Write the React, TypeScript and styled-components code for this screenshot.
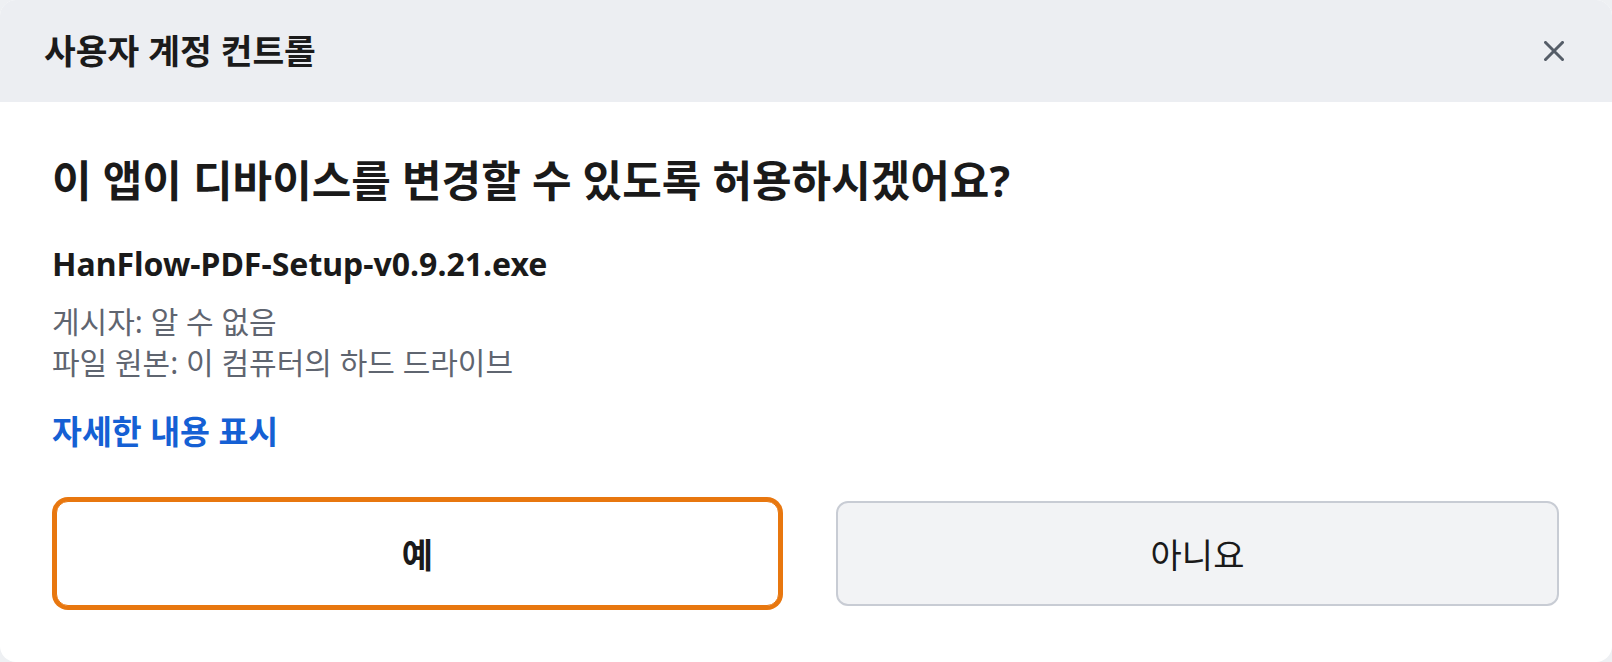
import React from "react";
import styled, { createGlobalStyle } from "styled-components";

const Global = createGlobalStyle`
  html, body { margin: 0; padding: 0; background: #eef0f3; }
  body { font-family: "Noto Sans", "Noto Sans CJK KR", sans-serif; }
  * { box-sizing: border-box; }
`;

const Dialog = styled.div`
  width: 1612px;
  height: 662px;
  background: #ffffff;
  border-radius: 16px;
  overflow: hidden;
  display: flex;
  flex-direction: column;
`;

const Header = styled.div`
  height: 102px;
  background: #eceef2;
  display: flex;
  align-items: center;
  justify-content: space-between;
  padding: 0 48px 0 44px;
`;

const Title = styled.h1`
  margin: 0;
  font-size: 34.5px;
  font-weight: 700;
  color: #1b1b1b;
  line-height: 44px;
`;

const CloseButton = styled.button`
  border: 0;
  background: transparent;
  padding: 0;
  width: 20px;
  height: 20px;
  display: flex;
  align-items: center;
  justify-content: center;
  cursor: pointer;
`;

const Body = styled.div`
  flex: 1;
  display: flex;
  flex-direction: column;
  padding: 53px 53px 0 52px;
`;

const Heading = styled.h2`
  margin: 0;
  font-size: 43px;
  font-weight: 700;
  line-height: 51px;
  color: #1a1a1a;
  white-space: nowrap;
`;

const FileName = styled.div`
  margin-top: 40px;
  font-size: 32px;
  font-weight: 700;
  line-height: 36px;
  color: #1a1a1a;
`;

const Meta = styled.div`
  margin-top: 19px;
  font-size: 30px;
  line-height: 41px;
  color: #5f6570;
`;

const Link = styled.a`
  margin-top: 32px;
  font-size: 32.5px;
  font-weight: 700;
  line-height: 34px;
  color: #1560d4;
  text-decoration: none;
  cursor: pointer;
  align-self: flex-start;
`;

const Buttons = styled.div`
  margin-top: 52px;
  display: grid;
  grid-template-columns: 1fr 1fr;
  gap: 57px;
  padding-left: 4px;
`;

const Button = styled.button<{ $primary?: boolean }>`
  height: 105px;
  border-radius: 12px;
  font-family: "Noto Sans", "Noto Sans CJK KR", sans-serif;
  font-size: 34px;
  color: #1a1a1a;
  cursor: pointer;
  font-weight: ${(p) => (p.$primary ? 700 : 400)};
  background: ${(p) => (p.$primary ? "#ffffff" : "#f2f3f5")};
  border: ${(p) => (p.$primary ? "1px solid #e8770f" : "2px solid #c8ccd4")};
  box-shadow: ${(p) => (p.$primary ? "0 0 0 4px #e8770f" : "none")};
`;

export default function App() {
  return (
    <>
      <Global />
      <Dialog>
        <Header>
          <Title>사용자 계정 컨트롤</Title>
          <CloseButton aria-label="닫기">
            <svg width="20" height="20" viewBox="0 0 20 20">
              <path
                d="M1.5 1.5 L18.5 18.5 M18.5 1.5 L1.5 18.5"
                stroke="#555d68"
                strokeWidth="3"
                strokeLinecap="square"
                fill="none"
              />
            </svg>
          </CloseButton>
        </Header>
        <Body>
          <Heading>이 앱이 디바이스를 변경할 수 있도록 허용하시겠어요?</Heading>
          <FileName>HanFlow-PDF-Setup-v0.9.21.exe</FileName>
          <Meta>
            게시자: 알 수 없음
            <br />
            파일 원본: 이 컴퓨터의 하드 드라이브
          </Meta>
          <Link>자세한 내용 표시</Link>
          <Buttons>
            <Button $primary>예</Button>
            <Button>아니요</Button>
          </Buttons>
        </Body>
      </Dialog>
    </>
  );
}
